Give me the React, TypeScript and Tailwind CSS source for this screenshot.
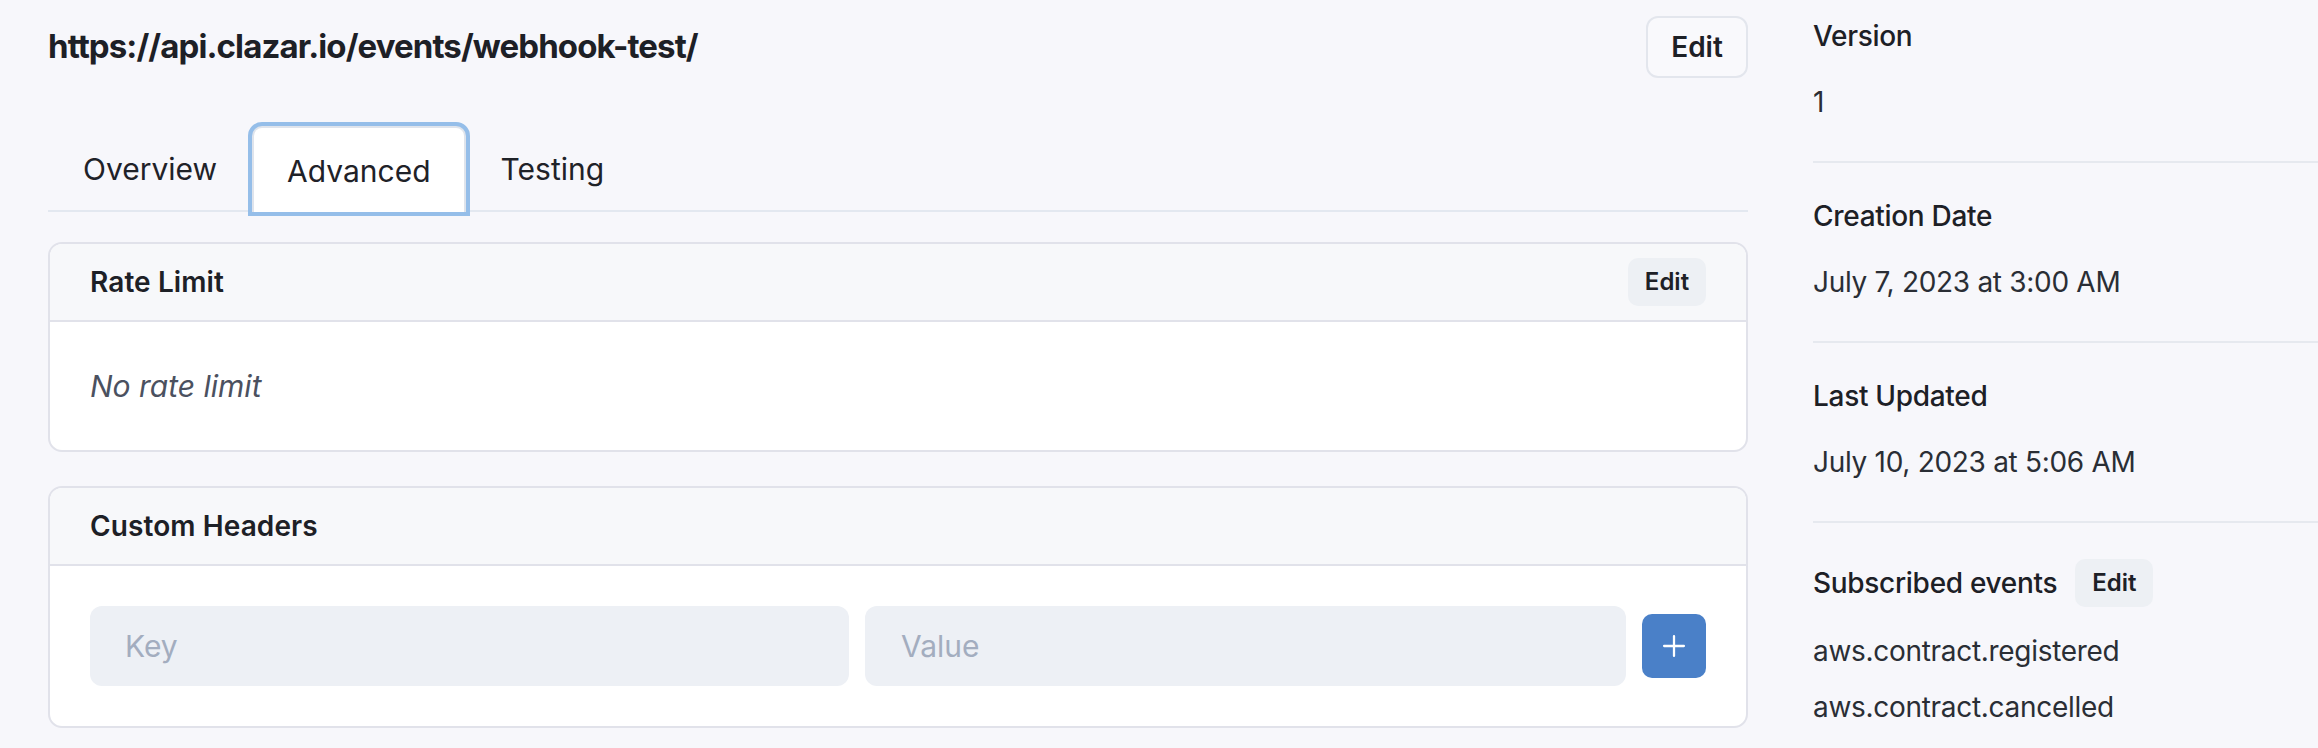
import { Plus } from "lucide-react";

function Chip({ label }: { label: string }) {
  return (
    <button className="h-[48px] w-[78px] rounded-[10px] bg-[#edf0f4] text-[24px] font-semibold text-[#1d2026] flex items-center justify-center">
      {label}
    </button>
  );
}

function Card({ title, action, children, bodyClass }: { title: string; action?: React.ReactNode; children: React.ReactNode; bodyClass: string }) {
  return (
    <div className="rounded-[14px] border-2 border-[#e1e2ea] bg-white overflow-hidden">
      <div className="h-[78px] bg-[#f7f8fa] border-b-2 border-[#e1e2ea] px-[40px] flex items-center justify-between">
        <p className="text-[28px] font-semibold tracking-[0.1px] text-[#1d2026]">{title}</p>
        {action}
      </div>
      <div className={bodyClass}>{children}</div>
    </div>
  );
}

function Detail({ label, value, first }: { label: string; value: string; first?: boolean }) {
  return (
    <div className={first ? "pb-[38px] border-b-2 border-[#e6e9ef]" : "pt-[32px] pb-[38px] border-b-2 border-[#e6e9ef]"}>
      <p className="text-[28px] leading-[42px] font-medium tracking-[-0.3px] text-[#1d2026]">{label}</p>
      <p className="mt-[24px] text-[28px] leading-[42px] tracking-[-0.3px] text-[#2a2e35]">{value}</p>
    </div>
  );
}

export default function App() {
  const tabs = ["Overview", "Advanced", "Testing"];
  return (
    <div className="flex min-h-[748px] bg-[#f7f7fb] pl-[48px] font-['Inter',sans-serif] text-[#1d2026]">
      {/* main column */}
      <div className="w-[1700px] pt-[16px]">
        <div className="flex items-center justify-between h-[62px]">
          <h1 className="text-[33px] font-bold tracking-[-0.9px]">https://api.clazar.io/events/webhook-test/</h1>
          <button className="h-[62px] w-[102px] rounded-[12px] border-2 border-[#e3e6ed] bg-[#f9f9fc] text-[28px] font-semibold">Edit</button>
        </div>

        <div className="mt-[48px] flex border-b-2 border-[#e3e8f0]">
          {tabs.map((t) =>
            t === "Advanced" ? (
              <div key={t} className="h-[86px] -mb-[2px] px-[33px] pt-[3px] flex items-center rounded-t-[10px] border-2 border-b-0 border-[#dfe4ec] bg-white ring-4 ring-[#95bee9] text-[30px] text-[#1f2228]">
                {t}
              </div>
            ) : (
              <div key={t} className="h-[84px] px-[35px] pt-[3px] flex items-center text-[30px] text-[#1f2228]">
                {t}
              </div>
            )
          )}
        </div>

        <div className="mt-[30px]">
          <Card title="Rate Limit" action={<Chip label="Edit" />} bodyClass="h-[128px] px-[40px] flex items-center">
            <p className="text-[30px] italic text-[#4b5160]">No rate limit</p>
          </Card>
        </div>

        <div className="mt-[34px]">
          <Card title="Custom Headers" bodyClass="py-[40px] px-[40px] flex items-center gap-[16px]">
            <div className="flex-1 h-[80px] rounded-[12px] bg-[#edf0f5] px-[35px] flex items-center text-[30px] text-[#a3adbf]">Key</div>
            <div className="flex-1 h-[80px] rounded-[12px] bg-[#edf0f5] px-[36px] flex items-center text-[30px] text-[#a3adbf]">Value</div>
            <button className="h-[64px] w-[64px] rounded-[10px] bg-[#4a80c8] flex items-center justify-center text-white">
              <Plus size={34} strokeWidth={1.6} />
            </button>
          </Card>
        </div>
      </div>

      {/* side column */}
      <div className="flex-1 ml-[65px] pt-[15px]">
        <Detail first label="Version" value="1" />
        <Detail label="Creation Date" value="July 7, 2023 at 3:00 AM" />
        <Detail label="Last Updated" value="July 10, 2023 at 5:06 AM" />
        <div className="pt-[36px]">
          <div className="flex items-center gap-[18px] h-[48px]">
            <p className="text-[28px] font-medium tracking-[-0.3px]">Subscribed events</p>
            <Chip label="Edit" />
          </div>
          <div className="mt-[23px] flex flex-col gap-[14px] text-[28px] leading-[42px] tracking-[-0.3px] text-[#2a2e35]">
            <p>aws.contract.registered</p>
            <p>aws.contract.cancelled</p>
          </div>
        </div>
      </div>
    </div>
  );
}
